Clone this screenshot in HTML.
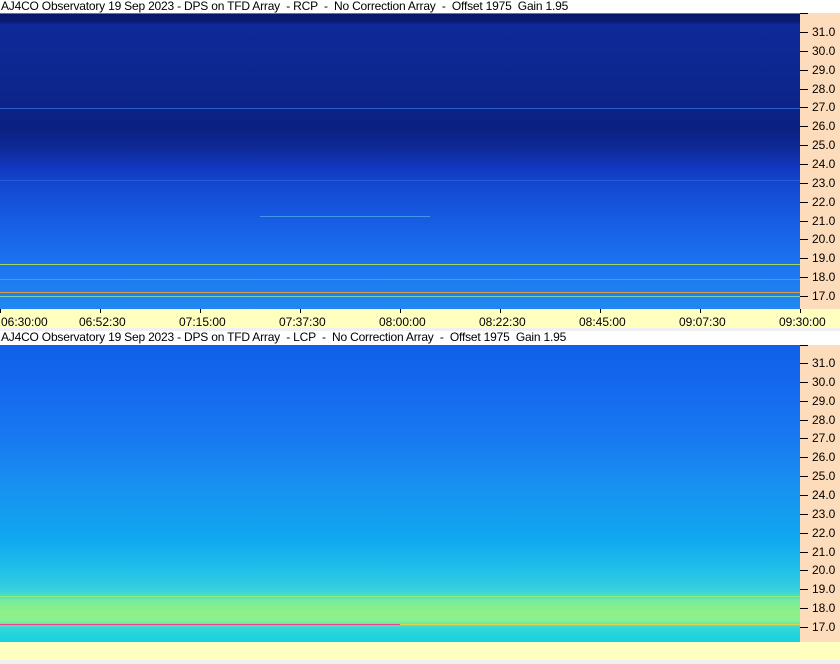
<!DOCTYPE html>
<html><head><meta charset="utf-8"><style>
*{margin:0;padding:0;box-sizing:border-box}
body{width:840px;height:664px;background:#f0f0f0;position:relative;overflow:hidden;font-family:"Liberation Sans",sans-serif;font-size:12px;color:#000}
.abs{position:absolute}
.title{left:0;width:840px;height:13px;background:#fff;line-height:13px;padding-left:1px;white-space:pre;font-size:12px;letter-spacing:-0.2px}
.spec{left:0;width:800px}
.axisR{left:800px;width:40px;background:#fddcbc}
.lab{position:absolute;left:812px;font-size:12px;line-height:12px}
.tk{position:absolute;left:800px;width:8px;height:1px;background:#000}
.ln{position:absolute;left:0;width:800px;height:1px}
.tl{position:absolute;top:315px;font-size:12px}
.tt{position:absolute;top:309px;width:1px;height:4px;background:#000}
</style></head><body>
<div class="abs title" style="top:0">AJ4CO Observatory 19 Sep 2023 - DPS on TFD Array  - RCP  -  No Correction Array  -  Offset 1975  Gain 1.95</div>
<div class="abs spec" style="top:13px;height:296px;background:linear-gradient(#2090d0 0,#2090d0 1px,#0a1868 1px,#0a1a70 8px,#0e2a98 12px,#0d2790 60px,#0c2488 95px,#0b2080 115px,#0e2a98 135px,#1238c0 155px,#1448d0 172px,#1658e0 200px,#1a68ec 230px,#1e78f0 262px,#2088f0 296px)">
<div class="ln" style="top:95px;background:#3070e0;opacity:.8"></div>
<div class="ln" style="top:167px;background:#2a68e0;opacity:.7"></div>
<div class="ln" style="top:251px;background:#c0f040;opacity:.8"></div>
<div class="ln" style="top:266px;background:#30c8e0;opacity:.6"></div>
<div class="ln" style="top:279px;background:#f0a030;opacity:.9"></div>
<div class="ln" style="top:283px;background:#a0f0a0;opacity:.7"></div>
<div class="ln" style="top:203px;left:260px;width:170px;background:#60c0f0;opacity:.6"></div>
</div>
<div class="abs axisR" style="top:13px;height:296px"></div>
<div class="abs" style="top:309px;left:0;width:840px;height:19px;background:#ffffc0"></div>
<div class="tt" style="left:0"></div><div class="tt" style="left:100px"></div><div class="tt" style="left:200px"></div><div class="tt" style="left:300px"></div><div class="tt" style="left:400px"></div><div class="tt" style="left:500px"></div><div class="tt" style="left:600px"></div><div class="tt" style="left:700px"></div><div class="tt" style="left:800px"></div>
<div class="tl" style="left:1px">06:30:00</div>
<div class="tl" style="left:79px">06:52:30</div>
<div class="tl" style="left:179px">07:15:00</div>
<div class="tl" style="left:279px">07:37:30</div>
<div class="tl" style="left:379px">08:00:00</div>
<div class="tl" style="left:479px">08:22:30</div>
<div class="tl" style="left:579px">08:45:00</div>
<div class="tl" style="left:679px">09:07:30</div>
<div class="tl" style="left:779px">09:30:00</div>
<div class="abs title" style="top:331px;height:14px">AJ4CO Observatory 19 Sep 2023 - DPS on TFD Array  - LCP  -  No Correction Array  -  Offset 1975  Gain 1.95</div>
<div class="abs spec" style="top:345px;height:297px;background:linear-gradient(#1060e8 0,#1468ee 40px,#1878f0 90px,#1890f0 140px,#10a8f0 195px,#20c0ea 225px,#38d0dc 245px,#50e0c0 251px,#78ec9c 256px,#90f088 268px,#88f090 276px,#30d8d8 283px,#18d0e0 297px)">
<div class="ln" style="top:251px;background:#a0f060;opacity:.7"></div>
<div class="ln" style="top:279px;left:0;width:400px;background:#f04090"></div>
<div class="ln" style="top:279px;left:400px;width:400px;background:#f0d040;opacity:.9"></div>
</div>
<div class="abs axisR" style="top:345px;height:297px"></div>
<div class="abs" style="top:642px;left:0;width:840px;height:18px;background:#ffffc0"></div>
<div id="r"></div>
<script>
var h='';
for(var i=0;i<15;i++){var v=(31-i).toFixed(1);var y1=32+i*18.86,y2=363+i*18.86;
h+='<div class="tk" style="top:'+Math.round(y1)+'px"></div><div class="lab" style="top:'+Math.round(y1-6)+'px">'+v+'</div>';
h+='<div class="tk" style="top:'+Math.round(y2)+'px"></div><div class="lab" style="top:'+Math.round(y2-6)+'px">'+v+'</div>';}
h+='<div class="tk" style="top:13px"></div><div class="tk" style="top:345px"></div>';
document.getElementById('r').innerHTML=h;
</script>
</body></html>
